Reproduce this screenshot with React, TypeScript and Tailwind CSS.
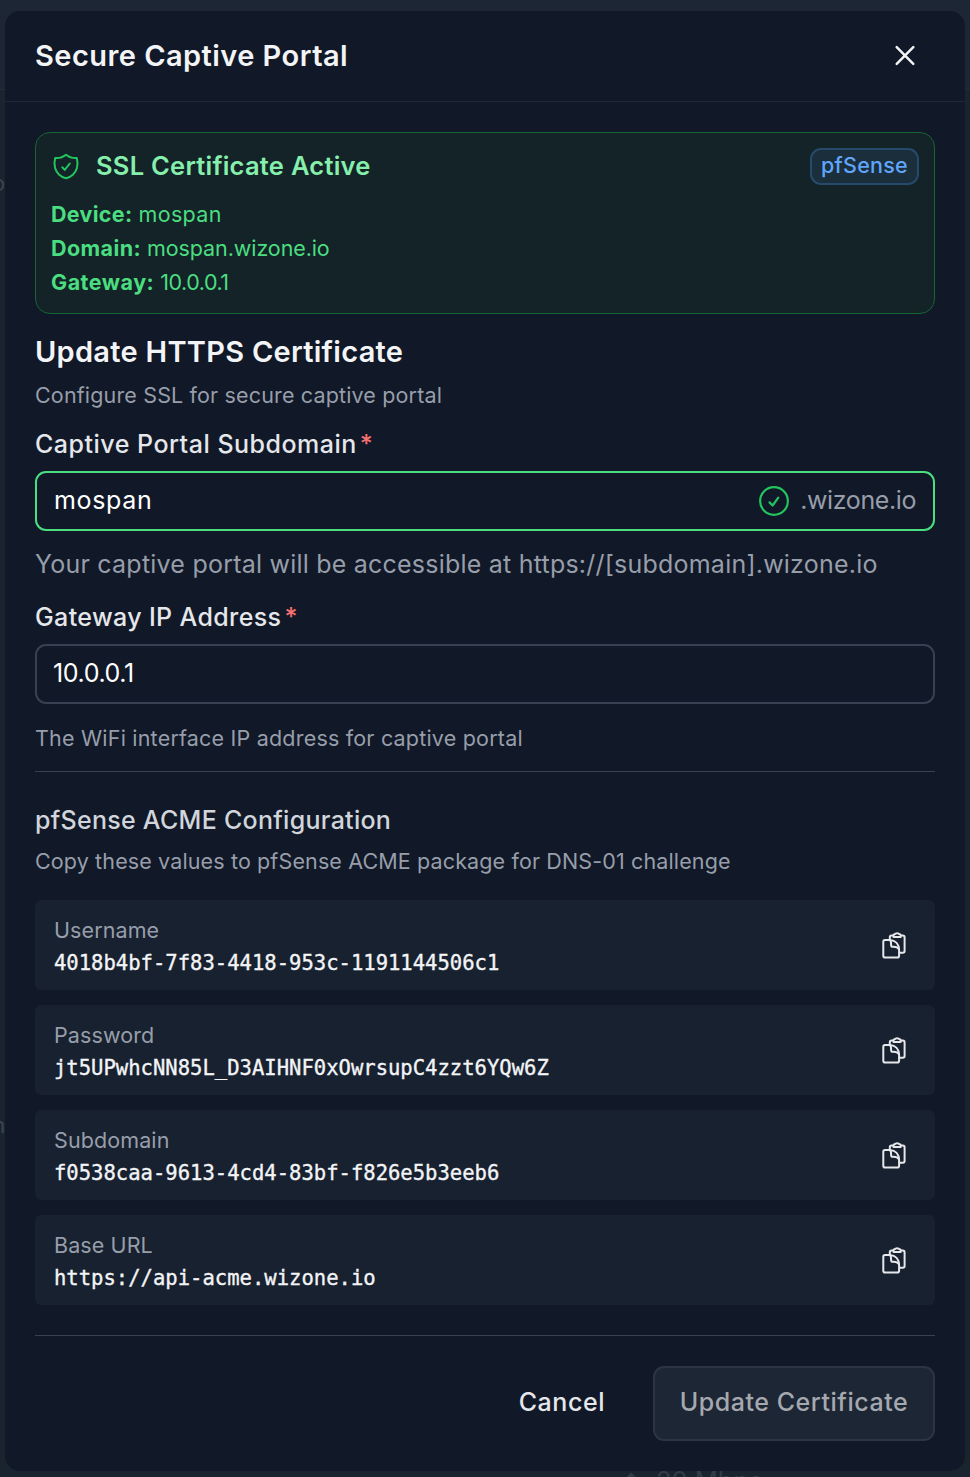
import React, { useState } from 'react';

interface AcmeField {
    label: string;
    value: string;
}

const acmeFields: AcmeField[] = [
    { label: 'Username', value: '4018b4bf-7f83-4418-953c-1191144506c1' },
    { label: 'Password', value: 'jt5UPwhcNN85L_D3AIHNF0xOwrsupC4zzt6YQw6Z' },
    { label: 'Subdomain', value: 'f0538caa-9613-4cd4-83bf-f826e5b3eeb6' },
    { label: 'Base URL', value: 'https://api-acme.wizone.io' },
];

const ShieldCheckIcon: React.FC = () => (
    <svg className="w-[30px] h-[30px] -mt-[2px] text-[#22c55e]" viewBox="0 0 30 30" fill="none" stroke="currentColor" strokeWidth="2" strokeLinecap="round" strokeLinejoin="round">
        <path d="M15 3.7C12 6.2 8 7.3 4.2 7C3.3 10 3.4 13.8 4.1 17C5.4 22.2 10 26.2 15 27.2C20 26.2 24.6 22.2 25.9 17C26.6 13.8 26.7 10 25.8 7C22 7.3 18 6.2 15 3.7Z" />
        <path d="M11.3 16.3L13.7 18.9L18.8 12.5" />
    </svg>
);

const CircleCheckIcon: React.FC = () => (
    <svg className="w-[30px] h-[30px] text-[#22c55e]" viewBox="0 0 30 30" fill="none" stroke="currentColor" strokeWidth="2.2" strokeLinecap="round" strokeLinejoin="round">
        <circle cx="15" cy="15" r="13.9" />
        <path d="M10.5 16.4L13.6 19.5L19.3 11.7" />
    </svg>
);

const CopyIcon: React.FC = () => (
    <svg className="w-[30px] h-[30px] text-gray-200" viewBox="0 0 30 30" fill="none" stroke="currentColor" strokeWidth="2" strokeLinecap="round" strokeLinejoin="round">
        <path d="M10.8 9.5V7.4C10.8 6.3 11.5 5.6 12.6 5.6H14.3M21.8 5.6H23.8C24.9 5.6 25.6 6.3 25.6 7.4V21C25.6 22.1 24.9 22.8 23.8 22.8H20.5" />
        <path d="M14.5 5.3C14.5 4.4 15.1 4.2 16 4.1C16.4 2.9 19.8 2.9 20.2 4.1C21.1 4.2 21.7 4.4 21.7 5.3V7H14.5Z" />
        <path d="M10.8 9.9H6C4.9 9.9 4.3 10.6 4.3 11.7V25.7C4.3 26.8 4.9 27.5 6 27.5H18.3C19.4 27.5 20.1 26.8 20.1 25.7V20C20.1 14 16.5 10.3 10.8 9.9Z" />
        <path d="M10.8 9.9C12.3 11 12.2 13 12.1 15.2C12.1 16.3 12.7 16.9 13.7 16.8C16.3 16.6 18.6 17 20 19.2" />
    </svg>
);

const CloseIcon: React.FC = () => (
    <svg className="w-[30px] h-[30px]" viewBox="0 0 30 30" fill="none" stroke="currentColor" strokeWidth="2.5" strokeLinecap="round">
        <path d="M6.7 6.2L23.3 22.8M23.3 6.2L6.7 22.8" />
    </svg>
);

const CopyRow: React.FC<AcmeField> = ({ label, value }) => (
    <div className="h-[90px] px-[19px] flex items-center justify-between rounded-md bg-[#18212f]">
        <div className="pt-[3px]">
            <p className="text-[21.5px] leading-8 tracking-[0.1px] text-[#979eaa]">{label}</p>
            <p className="pt-px font-['DejaVu_Sans_Mono',monospace] text-[20.55px] leading-8 text-gray-100 [-webkit-text-stroke:0.35px]">{value}</p>
        </div>
        <button type="button" title={`Copy ${label}`} className="mr-[7px]">
            <CopyIcon />
        </button>
    </div>
);

export default function App() {
    const [subdomain, setSubdomain] = useState('mospan');
    const [gateway, setGateway] = useState('10.0.0.1');

    return (
        <div className="relative w-[970px] h-[1477px] overflow-hidden bg-[#1a242f] px-[5px] pt-[11px] font-[Inter,sans-serif]">
            {/* dimmed page behind the dialog */}
            <div className="absolute inset-x-0 top-0 h-[90px] bg-[#1d2634] border-b border-[#232d39]" />
            <span className="absolute left-[-8px] top-[167px] text-[22px] text-[#3b4550]">o</span>
            <span className="absolute left-[-14px] top-[1109px] text-[22px] text-[#3b4550]">m</span>
            <div className="absolute left-[623px] top-[1466px] flex items-center gap-[17px] text-[#343c48]">
                <svg className="w-[16px] h-[20px]" viewBox="0 0 16 20" fill="none" stroke="currentColor" strokeWidth="2">
                    <path d="M1 10L8 3L15 10M8 3V20" />
                </svg>
                <span className="text-[25.5px] leading-[30px]">20 Mbps</span>
            </div>

            <div className="relative h-[1460px] rounded-[15px] bg-[#111827] overflow-hidden">
                <div className="h-[91px] pl-[30px] pr-[45px] flex items-center justify-between border-b border-gray-800 text-gray-100">
                    <h2 className="text-[29px] font-semibold tracking-[0.45px]">Secure Captive Portal</h2>
                    <button type="button" title="Close">
                        <CloseIcon />
                    </button>
                </div>

                <div className="px-[30px] pt-[30px]">
                    <div className="h-[182px] p-[15px] rounded-[15px] border border-[#166534] bg-[#142328]">
                        <div className="h-[37px] flex items-center justify-between">
                            <div className="flex items-center gap-[15px]">
                                <ShieldCheckIcon />
                                <h3 className="text-[25.5px] font-semibold tracking-[0.25px] text-[#86efac]">SSL Certificate Active</h3>
                            </div>
                            <span className="w-[109px] h-[37px] pb-[2px] flex items-center justify-center rounded-[11px] border-2 border-[#264a6b] bg-[#1a2e3b] text-[21.5px] font-medium tracking-[0.25px] text-[#60a5fa]">
                                pfSense
                            </span>
                        </div>
                        <div className="mt-3 text-[21.5px] leading-[34px] text-[#4ade80]">
                            <p><strong className="font-bold tracking-[0.3px]">Device:</strong> <span className="tracking-[0.35px]">mospan</span></p>
                            <p><strong className="font-bold tracking-[0.4px]">Domain:</strong> <span className="tracking-[-0.1px]">mospan.wizone.io</span></p>
                            <p><strong className="font-bold tracking-[0.5px]">Gateway:</strong> <span className="tracking-[-0.5px]">10.0.0.1</span></p>
                        </div>
                    </div>

                    <h3 className="mt-[15px] text-[29px] leading-[45px] font-semibold tracking-[0.27px] text-gray-100">Update HTTPS Certificate</h3>
                    <p className="mt-1 text-[21.5px] leading-[34px] tracking-[0.15px] text-[#979eaa]">Configure SSL for secure captive portal</p>

                    <label className="mt-3 flex gap-[3px] text-[25px] leading-10 font-medium text-gray-200">
                        <span className="tracking-[0.5px]">Captive Portal Subdomain</span>
                        <span className="text-[#f87171]">*</span>
                    </label>
                    <div className="mt-[7px] h-[60px] px-[17px] flex items-center rounded-[11px] border-2 border-[#4ade80]">
                        <input
                            value={subdomain}
                            onChange={(e) => setSubdomain(e.target.value)}
                            className="flex-1 min-w-0 bg-transparent text-[25px] tracking-[0.65px] text-white outline-none"
                        />
                        <CircleCheckIcon />
                        <span className="ml-[11px] text-[25px] tracking-[-0.4px] text-[#979eaa]">.wizone.io</span>
                    </div>
                    <p className="mt-[13px] text-[25px] leading-10 tracking-[0.22px] whitespace-nowrap text-[#979eaa]">
                        Your captive portal will be accessible at https://[subdomain].wizone.io
                    </p>

                    <label className="mt-[13px] flex gap-[3px] text-[25px] leading-10 font-medium text-gray-200">
                        <span className="tracking-[0.37px]">Gateway IP Address</span>
                        <span className="text-[#f87171]">*</span>
                    </label>
                    <div className="mt-[7px] h-[60px] px-[16px] flex items-center rounded-[11px] border-2 border-[#374151]">
                        <input
                            value={gateway}
                            onChange={(e) => setGateway(e.target.value)}
                            className="flex-1 min-w-0 bg-transparent text-[25px] tracking-[-0.4px] text-white outline-none"
                        />
                    </div>
                    <p className="mt-[17px] text-[21.5px] leading-[34px] tracking-[0.2px] text-[#979eaa]">The WiFi interface IP address for captive portal</p>

                    <div className="mt-4 pt-7 border-t border-[#374151]">
                        <h4 className="text-[25px] leading-10 font-medium tracking-[0.28px] text-gray-300">pfSense ACME Configuration</h4>
                        <p className="mt-1 text-[21.5px] leading-[34px] tracking-[0.13px] text-[#979eaa]">Copy these values to pfSense ACME package for DNS-01 challenge</p>
                        <div className="mt-[22px] flex flex-col gap-[15px]">
                            {acmeFields.map((field) => (
                                <CopyRow key={field.label} {...field} />
                            ))}
                        </div>
                    </div>

                    <div className="mt-[30px] pt-[30px] flex justify-end items-center gap-[48px] border-t border-[#374151] text-[25px] font-medium tracking-[0.55px]">
                        <button type="button" className="pb-[2px] text-gray-200">Cancel</button>
                        <button type="button" disabled className="w-[282px] h-[75px] pb-[2px] rounded-[11px] border-2 border-[#2b3543] bg-[#1d2634] text-[#a5a9af]">
                            Update Certificate
                        </button>
                    </div>
                </div>
            </div>
        </div>
    );
}
